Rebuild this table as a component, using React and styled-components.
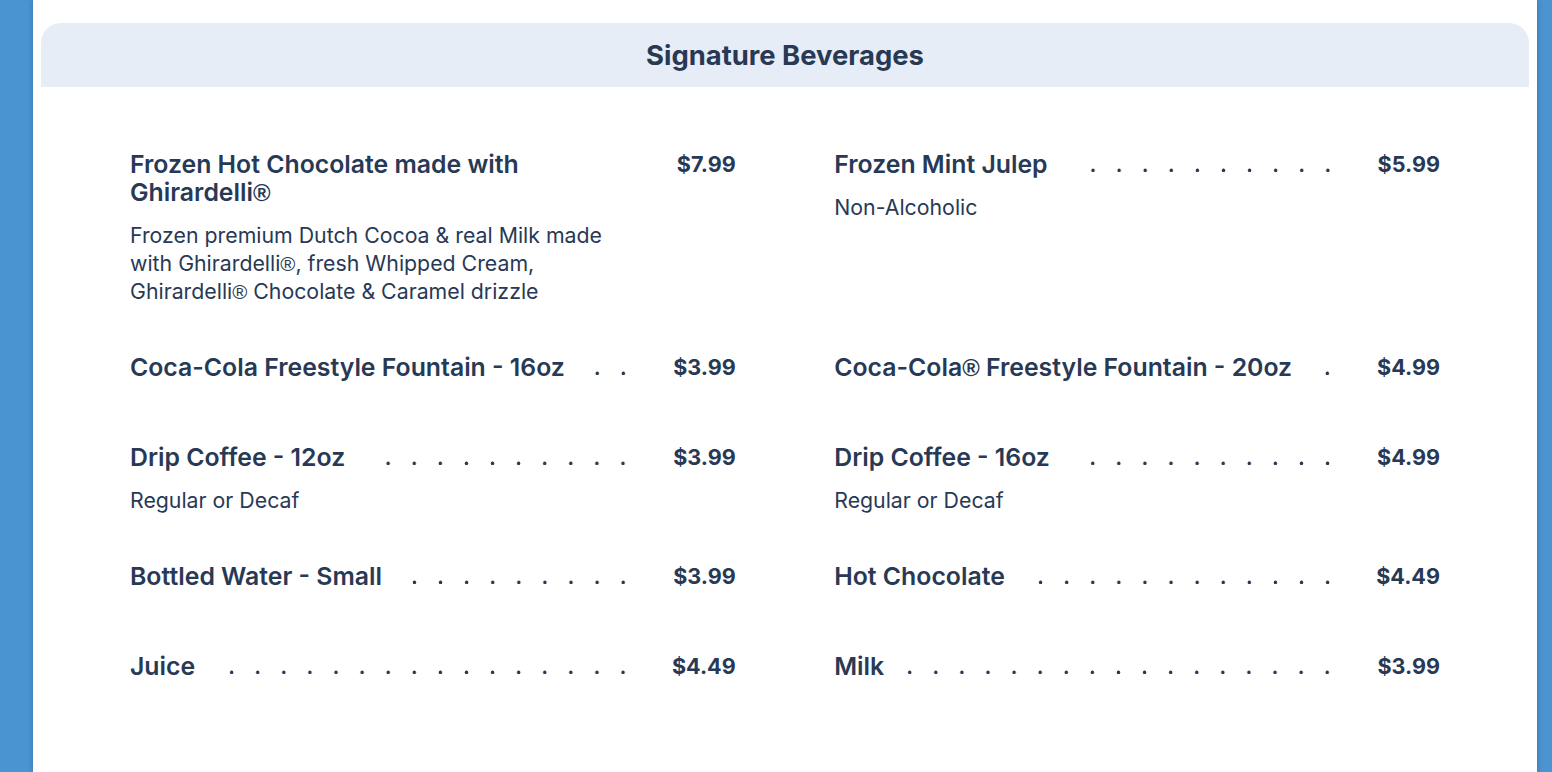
import React from "react";
import styled, { createGlobalStyle } from "styled-components";

const ink = "#283955";

const GlobalStyle = createGlobalStyle`
  html, body {
    margin: 0;
    padding: 0;
    background: #4a94d2;
    overflow: hidden;
  }
  body {
    font-family: Inter, "Noto Sans", sans-serif;
    color: ${ink};
    -webkit-font-smoothing: antialiased;
  }
`;

const Page = styled.div`
  display: flex;
  padding: 0 15px 0 33px;
  min-height: 100vh;
  box-sizing: border-box;
`;

const Card = styled.section`
  flex: 1;
  background: #ffffff;
  padding: 23px 8px 0;
  box-shadow: 0 0 5px rgba(20, 50, 90, 0.35);
  min-height: 100vh;
  box-sizing: border-box;
`;

const Header = styled.header`
  height: 64px;
  display: flex;
  align-items: center;
  justify-content: center;
  background: #e6edf6;
  border-radius: 20px 20px 0 0;
`;

const Title = styled.h2`
  margin: 0;
  font-size: 27.4px;
  font-weight: 700;
  line-height: 1.2;
`;

const MenuGrid = styled.div`
  display: grid;
  grid-template-columns: 1fr 1fr;
  column-gap: 98.5px;
  row-gap: 47.5px;
  padding: 63.3px 89px 40px;
`;

const Item = styled.div`
  display: flex;
  align-items: flex-start;
`;

const Body = styled.div`
  flex: 1 1 auto;
  min-width: 0;
`;

const HeadLine = styled.div`
  display: flex;
  align-items: flex-start;
`;

const Name = styled.h3`
  flex: 0 1 auto;
  margin: 0;
  font-size: 24.8px;
  font-weight: 600;
  line-height: 28px;
`;

const Leader = styled.span`
  flex: 1 1 0;
  min-width: 0;
  height: 28px;
  margin-left: 22px;
  background-image: radial-gradient(
    circle at 13.05px 20.3px,
    ${ink} 1.5px,
    transparent 2.1px
  );
  background-size: 26.1px 28px;
  background-repeat: repeat-x;
  background-position: right top;
`;

const Desc = styled.p`
  margin: 15px 0 0;
  max-width: 490px;
  font-size: 21.3px;
  font-weight: 400;
  line-height: 28px;
`;

const Price = styled.span`
  flex: none;
  width: 99.5px;
  text-align: right;
  font-size: 21.6px;
  font-weight: 700;
  line-height: 28px;
`;

const Reg = styled.span`
  font-family: "Liberation Sans", Arial, sans-serif;
  font-weight: ${(p) => (p.$bold ? 700 : 400)};
  font-size: 0.96em;
  line-height: 1;
`;

function withReg(text, bold) {
  const parts = text.split("®");
  return parts.map((part, i) => (
    <React.Fragment key={i}>
      {part}
      {i < parts.length - 1 && <Reg $bold={bold}>®</Reg>}
    </React.Fragment>
  ));
}

const items = [
  {
    name: "Frozen Hot Chocolate made with Ghirardelli®",
    price: "$7.99",
    desc: "Frozen premium Dutch Cocoa & real Milk made with Ghirardelli®, fresh Whipped Cream, Ghirardelli® Chocolate & Caramel drizzle",
  },
  { name: "Frozen Mint Julep", price: "$5.99", desc: "Non-Alcoholic" },
  { name: "Coca-Cola Freestyle Fountain - 16oz", price: "$3.99" },
  { name: "Coca-Cola® Freestyle Fountain - 20oz", price: "$4.99" },
  { name: "Drip Coffee - 12oz", price: "$3.99", desc: "Regular or Decaf" },
  { name: "Drip Coffee - 16oz", price: "$4.99", desc: "Regular or Decaf" },
  { name: "Bottled Water - Small", price: "$3.99" },
  { name: "Hot Chocolate", price: "$4.49" },
  { name: "Juice", price: "$4.49" },
  { name: "Milk", price: "$3.99" },
];

export default function App() {
  return (
    <>
      <GlobalStyle />
      <Page>
        <Card>
          <Header>
            <Title>Signature Beverages</Title>
          </Header>
          <MenuGrid>
            {items.map((it) => (
              <Item key={it.name}>
                <Body>
                  <HeadLine>
                    <Name>{withReg(it.name, true)}</Name>
                    <Leader />
                  </HeadLine>
                  <Desc>{it.desc ? withReg(it.desc, false) : ""}</Desc>
                </Body>
                <Price>{it.price}</Price>
              </Item>
            ))}
          </MenuGrid>
        </Card>
      </Page>
    </>
  );
}
